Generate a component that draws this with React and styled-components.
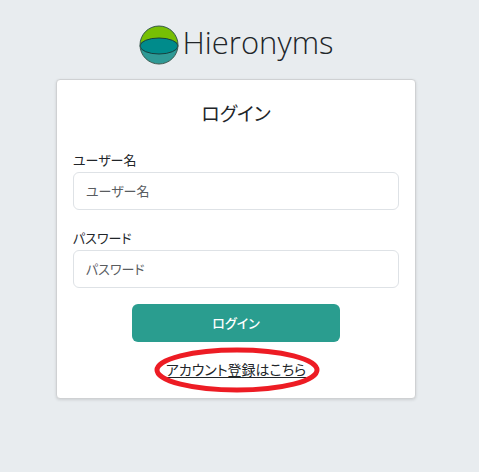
import React from 'react'
import styled, { createGlobalStyle } from 'styled-components'

const colors = {
  page: '#e8ecef',
  text: '#212529',
  muted: '#595c5f',
  border: '#dee2e6',
  primary: '#2a9d8f',
  mark: '#ed1c24',
}

const GlobalStyle = createGlobalStyle`
  *, *::before, *::after {
    box-sizing: border-box;
  }

  body {
    margin: 0;
    background-color: ${colors.page};
    color: ${colors.text};
    font-family: "Open Sans", "Noto Sans CJK JP", sans-serif;
    font-size: 13px;
    line-height: 24px;
    font-feature-settings: "palt";
  }
`

const Page = styled.main`
  display: flex;
  flex-direction: column;
  align-items: center;
  gap: 14px;
  padding: 25px 7px 24px 0;
`

const Brand = styled.header`
  display: flex;
  align-items: flex-start;
  gap: 4px;
`

const BrandName = styled.span`
  font-size: 31px;
  font-weight: 300;
  line-height: 34px;
`

const Card = styled.form`
  display: flex;
  flex-direction: column;
  gap: 16px;
  width: 100%;
  max-width: 360px;
  padding: 16px;
  background-color: #fff;
  border: 1px solid #cfd1d3;
  border-radius: 4px;
  box-shadow: 0 1px 3px rgba(0, 0, 0, .12);
`

const Title = styled.h1`
  margin: 0;
  font-size: 19px;
  font-weight: 400;
  line-height: 36px;
  text-align: center;
`

const Field = styled.div`
  display: flex;
  flex-direction: column;
`

const Input = styled.input`
  width: 100%;
  height: 38px;
  padding: 6px 12px;
  border: 1px solid ${colors.border};
  border-radius: 6px;
  background-color: #fff;
  color: inherit;
  font: inherit;
  font-feature-settings: inherit;

  &::placeholder {
    color: ${colors.muted};
    opacity: 1;
  }
`

const Submit = styled.button`
  align-self: center;
  width: 64%;
  height: 38px;
  padding: 0;
  border: 0;
  border-radius: 6px;
  background-color: ${colors.primary};
  color: #fff;
  font: inherit;
  font-weight: 500;
  font-feature-settings: inherit;
  cursor: pointer;
`

const Register = styled.div`
  position: relative;
  align-self: center;
  font-size: 14px;
`

const RegisterLink = styled.a`
  color: inherit;
  text-underline-offset: 2px;
  text-decoration-skip-ink: none;
`

const Highlight = styled.svg`
  position: absolute;
  top: 50%;
  left: 50%;
  transform: translate(-50%, -50%);
  pointer-events: none;
`

const Logo = () => (
  <svg width="40" height="40" viewBox="0 0 40 40" aria-hidden="true">
    <circle cx="20" cy="20" r="19" fill="#2f9a96" />
    <path d="M1 20a19 19 0 0 1 38 0z" fill="#77bf04" />
    <ellipse cx="20" cy="21" rx="19" ry="8" fill="#008b8b" stroke="#17413f" />
    <circle cx="20" cy="20" r="19" fill="none" stroke="#3e5a50" />
  </svg>
)

function TextField ({ id, label, type }) {
  return (
    <Field>
      <label htmlFor={id}>{label}</label>
      <Input id={id} name={id} type={type} placeholder={label} />
    </Field>
  )
}

function App () {
  return (
    <>
      <GlobalStyle />
      <Page>
        <Brand>
          <Logo />
          <BrandName>Hieronyms</BrandName>
        </Brand>
        <Card onSubmit={e => e.preventDefault()}>
          <Title>ログイン</Title>
          <TextField id="username" label="ユーザー名" type="text" />
          <TextField id="password" label="パスワード" type="password" />
          <Submit type="submit">ログイン</Submit>
          <Register>
            <RegisterLink href="#register">アカウント登録はこちら</RegisterLink>
            <Highlight width="168" height="48" viewBox="0 0 168 48" aria-hidden="true">
              <ellipse cx="85" cy="24" rx="80" ry="20" fill="none" stroke={colors.mark} strokeWidth="5" />
            </Highlight>
          </Register>
        </Card>
      </Page>
    </>
  )
}

export default App
